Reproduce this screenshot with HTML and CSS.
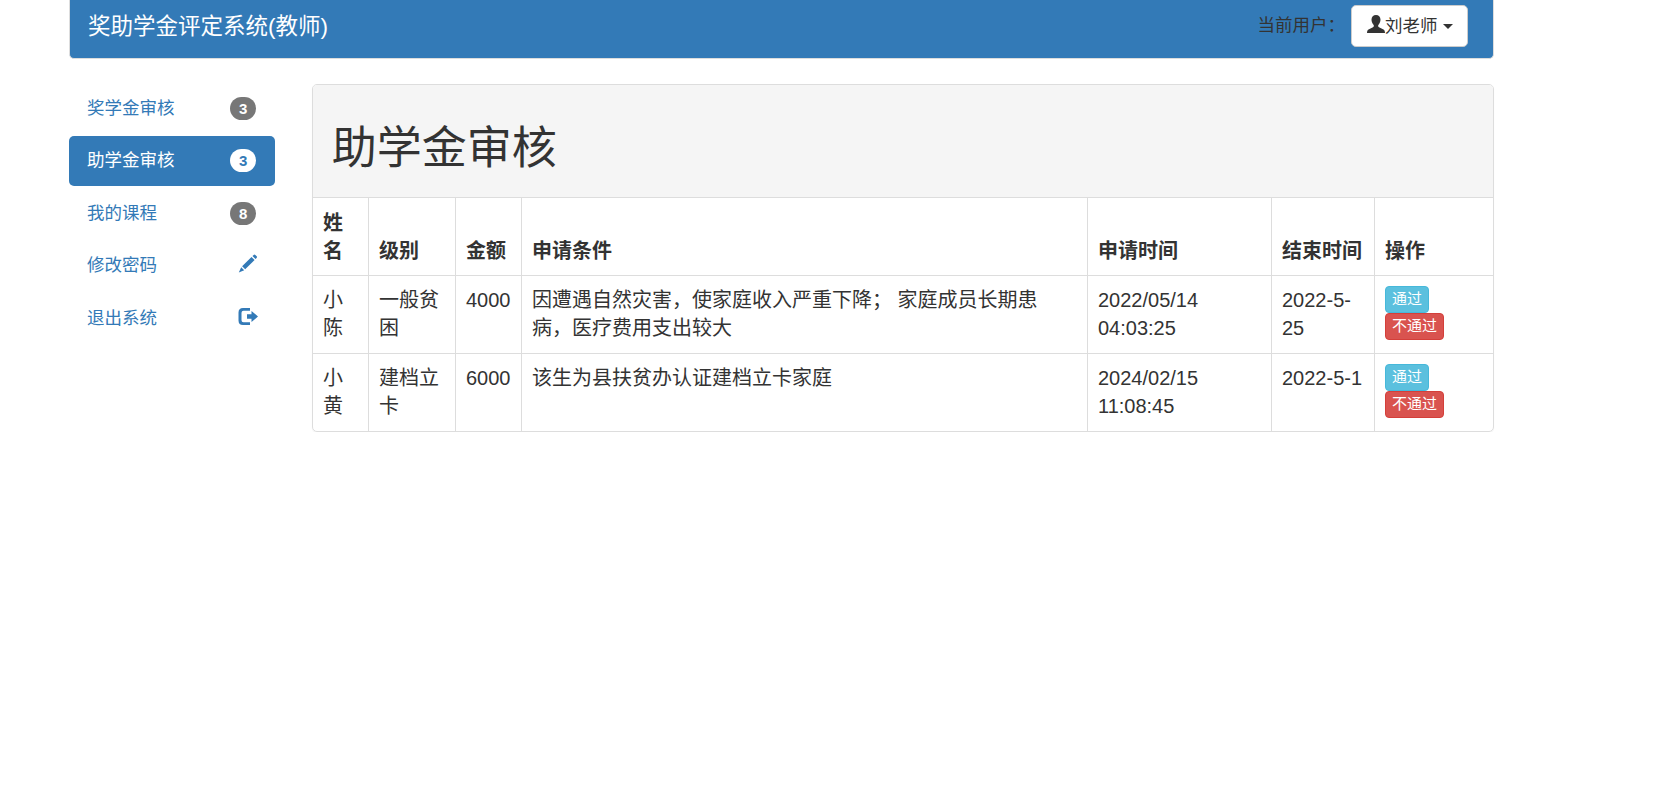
FILE: index.html
```html
<!DOCTYPE html>
<html lang="zh-CN">
<head>
  <meta charset="UTF-8">
  <meta name="viewport" content="width=device-width, initial-scale=1.0">
  <title>奖助学金评定系统</title>
  <link rel="stylesheet" href="styles.css">
</head>
<body>
  <div class="container">
    <nav class="navbar">
      <a class="navbar-brand" href="#">奖助学金评定系统(教师)</a>
      <div class="navbar-user">
        <span class="user-label">当前用户：</span>
        <button class="btn-user" type="button">
          <svg class="icon-user" viewBox="0 0 18 18"><path d="M9 0C6.300 0 4.500 1.800 4.500 4.600C4.500 6.700 5.300 8.300 6.300 9.500C7.200 10.600 7 11.700 6 12.200L1.500 14.400C.5 15 .1 16 0 18H18C17.900 16 17.500 15 16.500 14.400L12 12.200C11 11.700 10.800 10.600 11.700 9.500C12.700 8.300 13.500 6.700 13.500 4.600C13.500 1.800 11.700 0 9 0Z"/></svg><span>刘老师</span>
          <span class="caret"></span>
        </button>
      </div>
    </nav>

    <div class="row">
      <ul class="nav">
        <li><a href="#">奖学金审核<span class="badge">3</span></a></li>
        <li class="active"><a href="#">助学金审核<span class="badge">3</span></a></li>
        <li><a href="#">我的课程<span class="badge">8</span></a></li>
        <li><a href="#">修改密码
          <svg class="icon" viewBox="0 0 20 20"><path d="M14.500 2L15.700 .9Q16.500 .2 17.300 .9L18.700 2.300Q19.300 3.100 18.600 3.900L17.500 5ZM13.500 3L16.600 6L7.200 15.300L4.100 12.300ZM3.200 13.200L6.200 16.200L.8 18.400Z"/></svg></a></li>
        <li><a href="#">退出系统
          <svg class="icon" viewBox="0 0 20 20"><path d="M12 1H5Q.5 1 .5 5.500V13.500Q.5 18 5 18H12V15.200H5.500Q3.500 15.200 3.500 13.200V5.800Q3.500 3.800 5.500 3.800H12ZM13.500 4L20 9.500L13.500 15V11.800H9V7.200H13.500Z"/></svg></a></li>
      </ul>

      <div class="panel">
        <div class="panel-heading">
          <h1>助学金审核</h1>
        </div>
        <table class="table">
          <thead>
            <tr>
              <th class="col-name">姓名</th>
              <th class="col-level">级别</th>
              <th class="col-money">金额</th>
              <th class="col-reason">申请条件</th>
              <th class="col-apply">申请时间</th>
              <th class="col-end">结束时间</th>
              <th>操作</th>
            </tr>
          </thead>
          <tbody>
            <tr>
              <td>小陈</td>
              <td>一般贫困</td>
              <td>4000</td>
              <td>因遭遇自然灾害，使家庭收入严重下降； 家庭成员长期患病，医疗费用支出较大</td>
              <td>2022/05/14 04:03:25</td>
              <td>2022-5-25</td>
              <td>
                <div class="actions">
                  <a class="btn btn-info" href="#">通过</a>
                  <a class="btn btn-danger" href="#">不通过</a>
                </div>
              </td>
            </tr>
            <tr>
              <td>小黄</td>
              <td>建档立卡</td>
              <td>6000</td>
              <td>该生为县扶贫办认证建档立卡家庭</td>
              <td>2024/02/15 11:08:45</td>
              <td>2022-5-1</td>
              <td>
                <div class="actions">
                  <a class="btn btn-info" href="#">通过</a>
                  <a class="btn btn-danger" href="#">不通过</a>
                </div>
              </td>
            </tr>
          </tbody>
        </table>
      </div>
    </div>
  </div>
</body>
</html>
```

FILE: styles.css
```css
* {
  box-sizing: border-box;
}

body {
  margin: 0;
  font-family: "Liberation Sans", "Noto Sans CJK SC", sans-serif;
  font-size: 17.5px;
  line-height: 25px;
  color: #333;
  background-color: #fff;
}

a {
  color: #337ab7;
  text-decoration: none;
}

.container {
  width: 1425px;
  margin-left: 69px;
}

.navbar {
  display: flex;
  justify-content: space-between;
  height: 59px;
  padding: 5px 25px 0 18px;
  background-color: #337ab7;
  border: 1px solid #ddd;
  border-top: 0;
  border-radius: 0 0 5px 5px;
}

.navbar-brand {
  padding-top: 9px;
  font-size: 22.5px;
  color: #fff;
}

.navbar-user {
  display: flex;
  align-items: flex-start;
}

.user-label {
  padding-top: 8px;
  margin-right: 6px;
}

.btn-user {
  display: flex;
  align-items: center;
  width: 117px;
  height: 42px;
  padding: 0 0 0 15px;
  font: inherit;
  white-space: nowrap;
  color: #333;
  background-color: #fff;
  border: 1px solid #ccc;
  border-radius: 5px;
}

.icon-user {
  width: 18px;
  height: 18px;
  margin-bottom: 4px;
  fill: #333;
}

.caret {
  margin-left: 5px;
  border-top: 5px solid #333;
  border-left: 5px solid transparent;
  border-right: 5px solid transparent;
}

.row {
  display: flex;
  justify-content: space-between;
  align-items: flex-start;
  margin-top: 25px;
}

.nav {
  width: 206px;
  margin: -1px 0 0;
  padding: 0;
  list-style: none;
}

.nav li + li {
  margin-top: 2.5px;
}

.nav a {
  display: flex;
  justify-content: space-between;
  align-items: center;
  height: 50px;
  padding: 0 18.75px 0 18px;
  border-radius: 5px;
}

.nav .active a {
  color: #fff;
  background-color: #337ab7;
}

.badge {
  width: 26px;
  height: 23px;
  font-size: 15px;
  font-weight: bold;
  line-height: 23px;
  text-align: center;
  color: #fff;
  background-color: #777;
  border-radius: 12px;
}

.active .badge {
  color: #337ab7;
  background-color: #fff;
}

.icon {
  width: 20px;
  height: 20px;
  margin: 0 -2px 3px 0;
  fill: #337ab7;
}

.panel {
  width: 1182px;
  overflow: hidden;
  border: 1px solid #ddd;
  border-radius: 5px;
  box-shadow: 0 1px 1px rgba(0, 0, 0, 0.05);
}

.panel-heading {
  padding: 12.5px 18.75px;
  background-color: #f5f5f5;
}

h1 {
  margin: 26px 0 11.5px;
  font-size: 45px;
  font-weight: 400;
  line-height: 49.5px;
}

.table {
  width: 100%;
  table-layout: fixed;
  border-collapse: separate;
  border-spacing: 0;
  font-size: 20px;
  line-height: 28px;
}

th, td {
  height: 78px;
  padding: 10px;
  text-align: left;
  vertical-align: top;
  border-top: 1px solid #ddd;
  border-right: 1px solid #ddd;
}

th {
  font-weight: bold;
  vertical-align: bottom;
}

th:last-child, td:last-child {
  border-right: 0;
}

.col-name {
  width: 56px;
}

.col-level {
  width: 87px;
}

.col-money {
  width: 66px;
}

.col-reason {
  width: 566px;
}

.col-apply {
  width: 184px;
}

.col-end {
  width: 103px;
}

.actions {
  display: flex;
  flex-direction: column;
  align-items: flex-start;
}

.btn {
  height: 27px;
  padding: 0 6px;
  font-size: 15px;
  line-height: 24px;
  color: #fff;
  border: 1px solid;
  border-radius: 4px;
}

.btn-info {
  background-color: #5bc0de;
  border-color: #46b8da;
}

.btn-danger {
  background-color: #d9534f;
  border-color: #d43f3a;
}
```
